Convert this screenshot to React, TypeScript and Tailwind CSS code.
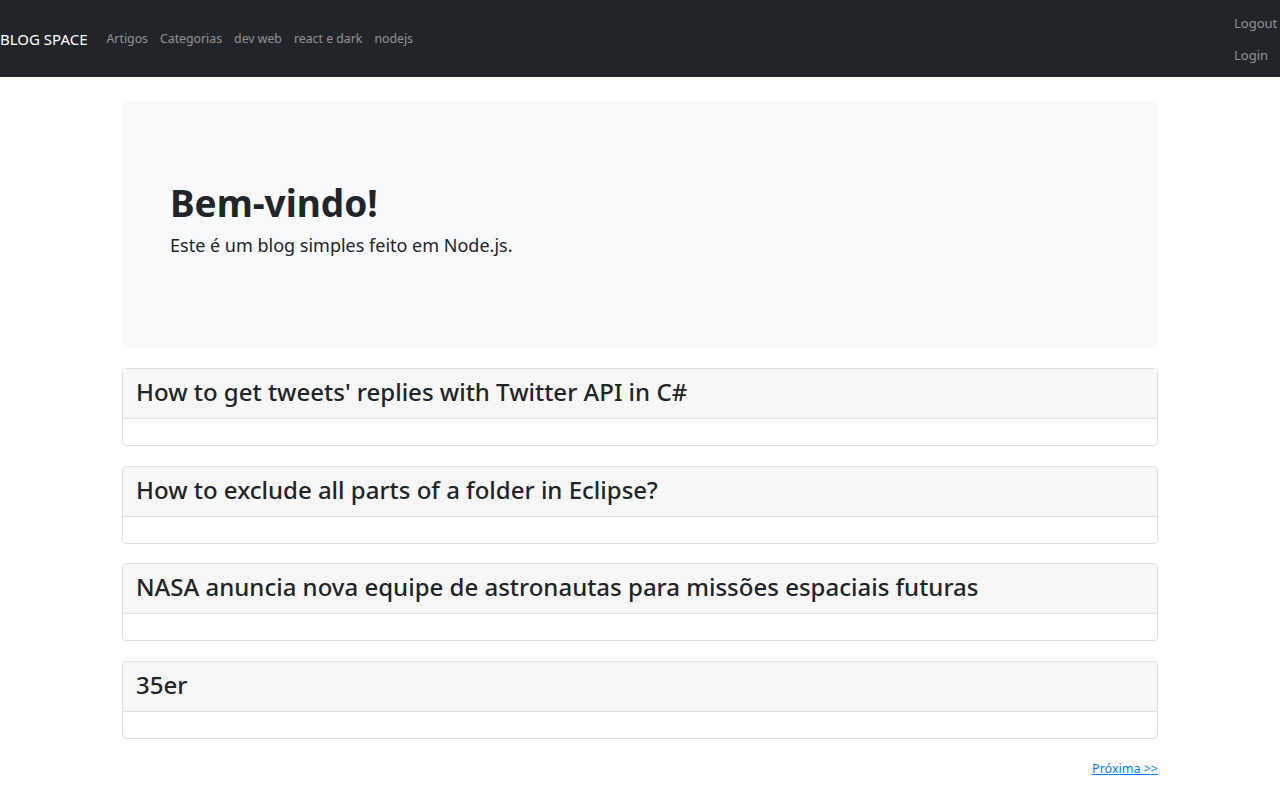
import React from "react";

const posts = [
  "How to get tweets' replies with Twitter API in C#",
  "How to exclude all parts of a folder in Eclipse?",
  "NASA anuncia nova equipe de astronautas para missões espaciais futuras",
  "35er",
];

export default function App() {
  return (
    <div className="min-h-[802px] bg-white text-[#212529] font-['Noto_Sans',sans-serif]">
      <nav className="h-[77px] bg-[#212529] flex items-center justify-between">
        <div className="flex items-center pt-[2px]">
          <a href="#" className="text-white text-[15px] mr-[19px]">BLOG SPACE</a>
          <ul className="flex gap-[12px] text-[12.3px] text-white/50">
            {["Artigos", "Categorias", "dev web", "react e dark", "nodejs"].map((l) => (
              <li key={l}>
                <a href="#">{l}</a>
              </li>
            ))}
          </ul>
        </div>
        <ul className="flex flex-col gap-[13px] text-[13px] text-white/50 w-[46px] items-start pt-[2px]">
          <li><a href="#">Logout</a></li>
          <li><a href="#">Login</a></li>
        </ul>
      </nav>

      <main className="w-[1036px] mx-auto pt-[24px]">
        <section className="h-[247px] bg-[#f8f9fa] rounded-[4px] px-[48px] pt-[78px]">
          <h1 className="text-[37px] font-bold leading-[47px]">Bem-vindo!</h1>
          <p className="text-[18px] mt-[6px]">Este é um blog simples feito em Node.js.</p>
        </section>

        <div className="flex flex-col gap-[19.7px] mt-[20px]">
          {posts.map((p) => (
            <div key={p} className="border border-[#dfdfdf] rounded-[4px] overflow-hidden">
              <div className="h-[50px] bg-[#f7f7f7] border-b border-[#dfdfdf] px-[13px] pb-[3px] flex items-center">
                <h3 className="text-[24px] font-medium leading-none">{p}</h3>
              </div>
              <div className="h-[26px]"></div>
            </div>
          ))}
        </div>

        <div className="flex justify-end mt-[21px]">
          <a href="#" className="text-[12.5px] text-[#007bff] underline">Próxima &gt;&gt;</a>
        </div>
      </main>
    </div>
  );
}
